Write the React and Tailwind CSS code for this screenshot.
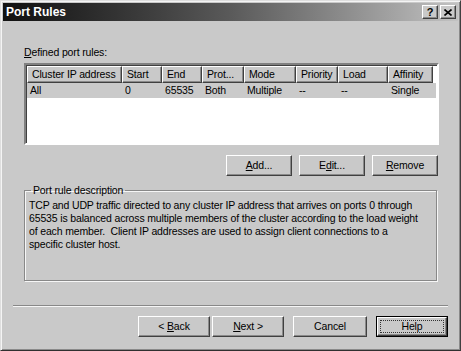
import React from "react";

const font = { fontFamily: '"Liberation Sans", Arial, sans-serif' };

const cols = [
  { label: "Cluster IP address", w: "w-[95px]", value: "All" },
  { label: "Start", w: "w-[40px]", value: "0" },
  { label: "End", w: "w-[40px]", value: "65535" },
  { label: "Prot...", w: "w-[42px]", value: "Both" },
  { label: "Mode", w: "w-[52px]", value: "Multiple" },
  { label: "Priority", w: "w-[42px]", value: "--" },
  { label: "Load", w: "w-[50px]", value: "--" },
  { label: "Affinity", w: "w-[45px]", value: "Single" },
];

const raised =
  "border border-t-white border-l-white border-r-[#404040] border-b-[#404040] shadow-[inset_-1px_-1px_0_#8a8a8a]";

function Button({ children, className = "", def }) {
  if (def) {
    return (
      <div className={"h-[21px] border border-black " + className}>
        <div className={"h-full flex items-center justify-center p-[2px] " + raised}>
          <div className="w-full h-full flex items-center justify-center border border-dotted border-[#333]">
            <span className="whitespace-pre">{children}</span>
          </div>
        </div>
      </div>
    );
  }
  return (
    <div className={"h-[21px] flex items-center justify-center " + raised + " " + className}>
      <span className="whitespace-pre">{children}</span>
    </div>
  );
}

function U({ children }) {
  return <span className="underline underline-offset-[1px]">{children}</span>;
}

export default function App() {
  return (
    <div
      className="w-[461px] h-[351px] bg-[#c9c9c9] text-[10.5px] tracking-[-0.15px] text-black flex flex-col border border-t-[#dedede] border-l-[#dedede] border-r-[#404040] border-b-[#303030] shadow-[inset_1px_1px_0_#f4f4f4,inset_-1px_-1px_0_#8a8a8a]"
      style={font}
    >
      {/* Title bar */}
      <div className="mx-[2px] mt-[2px] h-[18px] flex items-center pl-[3px] pr-[2px] bg-gradient-to-r from-[#111] via-[#5a5a5a] to-[#c2c2c2]">
        <span className="text-white font-bold text-[12px] tracking-normal leading-none">Port Rules</span>
        <div className="ml-auto flex gap-[2px]">
          <div className={"w-[16px] h-[14px] bg-[#c9c9c9] flex items-center justify-center font-bold text-[11px] leading-none " + raised}>?</div>
          <div className={"w-[16px] h-[14px] bg-[#c9c9c9] flex items-center justify-center " + raised}>
            <svg width="8" height="7" viewBox="0 0 8 7">
              <path d="M0.5 0.5 L7.5 6.5 M7.5 0.5 L0.5 6.5" stroke="#000" strokeWidth="1.6" />
            </svg>
          </div>
        </div>
      </div>

      <div className="flex flex-col pl-[23px] pr-[21px]">
        <div className="mt-[24px] h-[15px] leading-[15px]">
          <U>D</U>efined port rules:
        </div>

        {/* List view */}
        <div className="mt-[3px] h-[82px] bg-white border-2 border-t-[#808080] border-l-[#808080] border-r-white border-b-white shadow-[inset_1px_1px_0_#404040]">
          <div className="flex pl-[1px] pt-[1px]">
            {cols.map((c) => (
              <div
                key={c.label}
                className={c.w + " h-[17px] shrink-0 bg-[#c9c9c9] pl-[4px] leading-[15px] whitespace-nowrap overflow-hidden " + raised}
              >
                {c.label}
              </div>
            ))}
          </div>
          <div className="flex ml-[1px] mr-[1px] h-[15px] bg-[#cacaca] leading-[15px]">
            {cols.map((c) => (
              <div key={c.label} className={c.w + " shrink-0 pl-[3px] whitespace-nowrap"}>
                {c.value}
              </div>
            ))}
          </div>
        </div>

        <div className="mt-[10px] flex justify-end gap-[7px] pr-[1px]">
          <Button className="w-[66px]"><U>A</U>dd...</Button>
          <Button className="w-[66px]">E<U>d</U>it...</Button>
          <Button className="w-[66px]"><U>R</U>emove</Button>
        </div>

        {/* Group box */}
        <fieldset className="mt-[8px] h-[97px] border border-[#888] shadow-[1px_1px_0_#f6f6f6,inset_1px_1px_0_#f6f6f6] pl-[4px] pr-[4px] mr-[2px]">
          <legend className="ml-[2px] px-[2px] leading-[13px]">Port rule description</legend>
          <p className="mt-[2px] leading-[13px] whitespace-nowrap">
            TCP and UDP traffic directed to any cluster IP address that arrives on ports 0 through
            <br />
            65535 is balanced across multiple members of the cluster according to the load weight
            <br />
            of each member.&nbsp; Client IP addresses are used to assign client connections to a
            <br />
            specific cluster host.
          </p>
        </fieldset>
      </div>

      {/* Separator */}
      <div className="mt-[24px] mx-[12px] h-[2px] border-t border-t-[#888] border-b border-b-[#f6f6f6]"></div>

      <div className="mt-[9px] flex pl-[137px] pr-[12px]">
        <Button className="w-[72px]">{"< "}<U>B</U>ack</Button>
        <Button className="w-[72px] ml-[2px]"><U>N</U>ext {">"}</Button>
        <Button className="w-[74px] ml-[9px]">Cancel</Button>
        <Button className="w-[72px] ml-[9px]" def>Help</Button>
      </div>
    </div>
  );
}
